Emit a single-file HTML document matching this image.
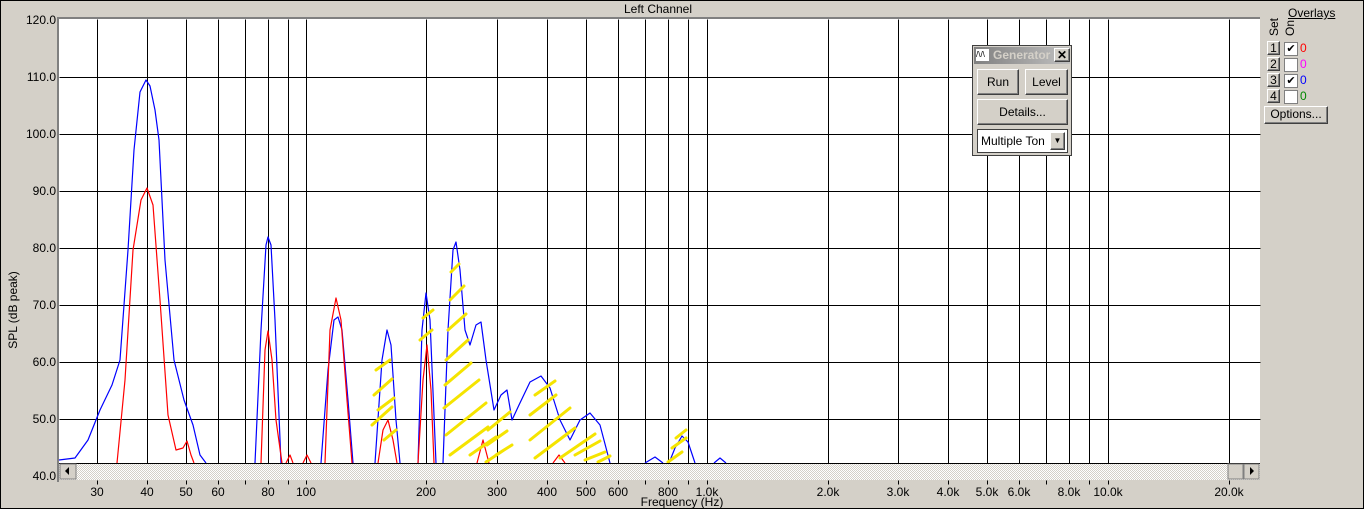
<!DOCTYPE html>
<html><head><meta charset="utf-8"><style>
body{margin:0;width:1364px;height:509px;overflow:hidden;background:#d4d0c8;font-family:"Liberation Sans",sans-serif;}
svg{position:absolute;left:0;top:0}
.t{font-size:12px;fill:#000}
.btn{position:absolute;background:#d4d0c8;border:1px solid;border-color:#fff #404040 #404040 #fff;box-shadow:inset -1px -1px 0 #808080;font-size:12px;text-align:center;box-sizing:border-box}
</style></head><body>
<svg width="1364" height="509" xmlns="http://www.w3.org/2000/svg">
<rect x="0.5" y="0.5" width="1363" height="508" fill="none" stroke="#000"/>
<text x="658" y="13" class="t" text-anchor="middle">Left Channel</text>
<rect x="57" y="17" width="1203" height="2" fill="#808080"/>
<rect x="57" y="17" width="2" height="465" fill="#808080"/>
<rect x="59" y="19" width="1201" height="444" fill="#fff"/>
<g stroke="#000" stroke-width="1" shape-rendering="crispEdges" transform="translate(0.5,0.5)">
<path d="M97 19V463M147 19V463M186 19V463M218 19V463M245 19V463M268 19V463M288 19V463M306 19V463M426 19V463M497 19V463M547 19V463M586 19V463M618 19V463M645 19V463M668 19V463M688 19V463M707 19V463M828 19V463M898 19V463M948 19V463M987 19V463M1019 19V463M1046 19V463M1069 19V463M1089 19V463M1108 19V463M1229 19V463"/>
<path d="M59 77H1260M59 134H1260M59 191H1260M59 248H1260M59 305H1260M59 362H1260M59 419H1260"/>
<path d="M97 480v4M147 480v4M186 480v4M218 480v4M245 480v4M268 480v4M288 480v4M306 480v4M426 480v4M497 480v4M547 480v4M586 480v4M618 480v4M645 480v4M668 480v4M688 480v4M707 480v4M828 480v4M898 480v4M948 480v4M987 480v4M1019 480v4M1046 480v4M1069 480v4M1089 480v4M1108 480v4M1229 480v4"/>
</g>
<g fill="none" stroke="#0000ff" stroke-width="1.2" stroke-linejoin="round">
<path d="M59 460L75 458L88 440L100 410L112 385L120 360L128 250L134 150L140 92L146 80L150 86L155 110L159 140L165 260L174 360L184 400L193 425L200 455L206 463"/>
<path d="M255 463L261 330L266 245L268 237L271 245L275 320L281 463"/>
<path d="M321 463L328 370L334 320L338 317L342 330L348 400L353 463"/>
<path d="M375 463L382 360L387 330L391 345L396 420L400 463"/>
<path d="M418 463L422 330L426 293L430 320L436 463"/>
<path d="M443 463L448 330L453 250L456 242L460 270L465 330L470 345L476 325L481 322L486 360L494 410L501 395L507 390L512 420L519 405L530 382L541 376L550 388L560 420L570 440L580 420L590 413L600 425L610 463"/>
<path d="M645 463L655 457L663 463M669 463L675 448L682 436L688 442L695 463M714 463L720 458L726 463"/>
</g>
<g fill="none" stroke="#ff0000" stroke-width="1.2" stroke-linejoin="round">
<path d="M117 463L125 380L133 250L141 200L147 188L153 205L160 300L168 415L176 450L183 448L187 441L191 455L194 463"/>
<path d="M261 463L265 350L268 331L272 360L276 420L282 463"/>
<path d="M286 463L290 455L293 463M303 463L307 455L311 463"/>
<path d="M325 463L330 330L336 298L341 320L347 400L352 463"/>
<path d="M378 463L383 430L388 420L393 440L397 463"/>
<path d="M418 463L423 380L427 345L431 390L434 463"/>
<path d="M477 463L483 440L489 463M553 463L559 455L565 463"/>
</g>
<g stroke="#f5e400" stroke-width="3" stroke-linecap="round" fill="none">
<path d="M376 370l14-10M374 395l18-16M372 425l20-18M378 410l16-12M384 440l12-10"/>
<path d="M423 318l10-8M420 340l12-10"/>
<path d="M451 272l8-8M450 300l14-14M448 330l18-16M446 360l22-20M445 385l26-22M444 408l35-28M446 435l40-32M450 455l38-28M470 455l26-18M486 462l18-12M487 445l20-14M488 430l22-18M496 455l16-10"/>
<path d="M535 395l20-14M530 415l26-20M530 440l40-32M535 458l40-30M560 458l35-24M575 455l25-14M585 460l20-8M598 462l12-6"/>
<path d="M668 462l14-10M672 448l14-10M676 438l10-8"/>
</g>
<g class="t">
<text x="56" y="24" text-anchor="end" class="t">120.0</text>
<text x="56" y="81" text-anchor="end" class="t">110.0</text>
<text x="56" y="138" text-anchor="end" class="t">100.0</text>
<text x="56" y="195" text-anchor="end" class="t">90.0</text>
<text x="56" y="252" text-anchor="end" class="t">80.0</text>
<text x="56" y="309" text-anchor="end" class="t">70.0</text>
<text x="56" y="366" text-anchor="end" class="t">60.0</text>
<text x="56" y="423" text-anchor="end" class="t">50.0</text>
<text x="56" y="480" text-anchor="end" class="t">40.0</text>
</g>
<text transform="translate(17 310) rotate(-90)" class="t" text-anchor="middle">SPL (dB peak)</text>
<g class="t" text-anchor="middle">
<text x="97" y="496">30</text><text x="147" y="496">40</text><text x="186" y="496">50</text><text x="218" y="496">60</text><text x="268" y="496">80</text><text x="306" y="496">100</text><text x="426" y="496">200</text><text x="497" y="496">300</text><text x="547" y="496">400</text><text x="586" y="496">500</text><text x="618" y="496">600</text><text x="668" y="496">800</text><text x="707" y="496">1.0k</text><text x="828" y="496">2.0k</text><text x="898" y="496">3.0k</text><text x="948" y="496">4.0k</text><text x="987" y="496">5.0k</text><text x="1019" y="496">6.0k</text><text x="1069" y="496">8.0k</text><text x="1108" y="496">10.0k</text><text x="1229" y="496">20.0k</text>
</g>
<text x="682" y="506" class="t" text-anchor="middle">Frequency (Hz)</text>
<defs><pattern id="p" width="2" height="2" patternUnits="userSpaceOnUse"><rect width="2" height="2" fill="#fff"/><rect width="1" height="1" fill="#d4d0c8"/><rect x="1" y="1" width="1" height="1" fill="#d4d0c8"/></pattern></defs>
<rect x="59" y="463" width="1201" height="17" fill="url(#p)"/>
<line x1="59" y1="463.5" x2="1260" y2="463.5" stroke="#000"/>
<rect x="60" y="464" width="16" height="15" fill="#d4d0c8" stroke="#808080"/>
<path d="M65 471l4-4v8z" fill="#000"/>
<rect x="1228" y="464" width="15" height="15" fill="#d4d0c8" stroke="#808080"/>
<rect x="1244" y="464" width="15" height="15" fill="#d4d0c8" stroke="#808080"/>
<path d="M1254 471l-4-4v8z" fill="#000"/>
</svg>
<div style="position:absolute;left:1288px;top:6px;font-size:12px;text-decoration:underline">Overlays</div>
<div style="position:absolute;left:1267px;top:36px;font-size:12px;transform:rotate(-90deg);transform-origin:left top">Set</div>
<div style="position:absolute;left:1283px;top:36px;font-size:12px;transform:rotate(-90deg);transform-origin:left top">On</div>
<div class="btn" style="left:1267px;top:41px;width:13px;height:14px;line-height:12px">1</div>
<div class="btn" style="left:1267px;top:57px;width:13px;height:14px;line-height:12px">2</div>
<div class="btn" style="left:1267px;top:73px;width:13px;height:14px;line-height:12px">3</div>
<div class="btn" style="left:1267px;top:89px;width:13px;height:14px;line-height:12px">4</div>
<div style="position:absolute;left:1284px;top:42px;width:12px;height:12px;background:#fff;border:1px solid #808080;font-size:11px;line-height:12px;text-align:center">✔</div>
<div style="position:absolute;left:1284px;top:58px;width:12px;height:12px;background:#fff;border:1px solid #808080"></div>
<div style="position:absolute;left:1284px;top:74px;width:12px;height:12px;background:#fff;border:1px solid #808080;font-size:11px;line-height:12px;text-align:center">✔</div>
<div style="position:absolute;left:1284px;top:90px;width:12px;height:12px;background:#fff;border:1px solid #808080"></div>
<div style="position:absolute;left:1300px;top:41px;font-size:12px;color:#f00">0</div>
<div style="position:absolute;left:1300px;top:57px;font-size:12px;color:#f0f">0</div>
<div style="position:absolute;left:1300px;top:73px;font-size:12px;color:#00f">0</div>
<div style="position:absolute;left:1300px;top:89px;font-size:12px;color:#080">0</div>
<div class="btn" style="left:1264px;top:106px;width:64px;height:18px;line-height:15px">Options...</div>
<div style="position:absolute;left:972px;top:45px;width:100px;height:111px;background:#d4d0c8;border:1px solid #404040;box-sizing:border-box">
<div style="position:absolute;left:1px;top:1px;width:96px;height:17px;background:linear-gradient(90deg,#808080,#c0c0c0)"></div>
<div style="position:absolute;left:3px;top:3px;width:13px;height:12px;background:#fff;font-size:8px;line-height:12px">/\/\</div>
<div style="position:absolute;left:20px;top:2px;font-size:12px;font-weight:bold;color:#d4d0c8;width:58px;overflow:hidden;white-space:nowrap">Generator</div>
<div class="btn" style="left:81px;top:2px;width:16px;height:14px;line-height:12px;font-weight:bold">✕</div>
<div class="btn" style="left:4px;top:23px;width:42px;height:26px;line-height:24px">Run</div>
<div class="btn" style="left:52px;top:23px;width:43px;height:26px;line-height:24px">Level</div>
<div class="btn" style="left:4px;top:53px;width:91px;height:26px;line-height:24px">Details...</div>
<div style="position:absolute;left:4px;top:83px;width:91px;height:24px;background:#fff;border:1px solid #404040;box-sizing:border-box;font-size:12px;line-height:22px;padding-left:3px;color:#000">Multiple Ton</div>
<div class="btn" style="left:77px;top:86px;width:15px;height:18px;font-size:8px;line-height:16px">▼</div>
</div>
</body></html>
